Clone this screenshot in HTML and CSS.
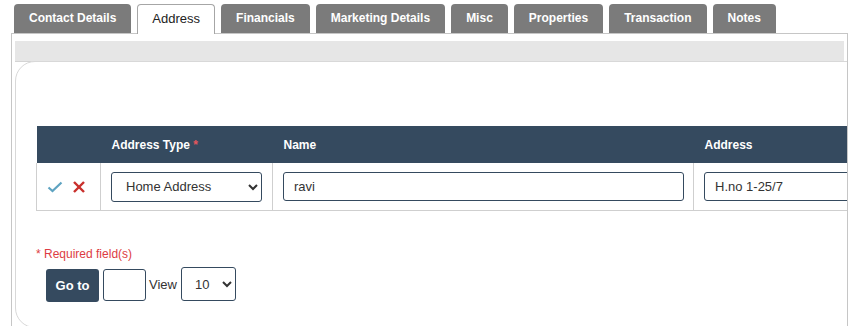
FILE: index.html
```html
<!DOCTYPE html>
<html lang="en">

<head>
    <meta charset="UTF-8">
    <meta name="viewport" content="width=device-width, initial-scale=1.0">
    <title>Address</title>
    <link rel="stylesheet" href="styles.css">
</head>

<body>
    <div class="page">
        <ul class="tabs">
            <li class="tab">Contact Details</li>
            <li class="tab active">Address</li>
            <li class="tab">Financials</li>
            <li class="tab">Marketing Details</li>
            <li class="tab">Misc</li>
            <li class="tab">Properties</li>
            <li class="tab">Transaction</li>
            <li class="tab">Notes</li>
        </ul>

        <div class="panel">
            <div class="panel-bar"></div>
            <div class="card">
                <table class="grid">
                    <colgroup>
                        <col class="col-actions">
                        <col class="col-type">
                        <col class="col-name">
                        <col class="col-address">
                    </colgroup>
                    <thead>
                        <tr>
                            <th></th>
                            <th>Address Type <span class="req">*</span></th>
                            <th>Name</th>
                            <th>Address</th>
                        </tr>
                    </thead>
                    <tbody>
                        <tr>
                            <td class="actions">
                                <svg class="icon" width="16" height="14" viewBox="0 0 16 14">
                                    <polyline points="1.5,7.5 5.5,11 14.5,2.5" fill="none" stroke="#5ea3c1" stroke-width="2.2" />
                                </svg>
                                <svg class="icon" width="14" height="14" viewBox="0 0 14 14">
                                    <line x1="2" y1="2" x2="12" y2="12" stroke="#c9302c" stroke-width="2.4" />
                                    <line x1="12" y1="2" x2="2" y2="12" stroke="#c9302c" stroke-width="2.4" />
                                </svg>
                            </td>
                            <td>
                                <select class="field select-type">
                                    <option>Home Address</option>
                                </select>
                            </td>
                            <td><input class="field input-name" type="text" value="ravi"></td>
                            <td><input class="field input-address" type="text" value="H.no 1-25/7"></td>
                        </tr>
                    </tbody>
                </table>

                <div class="required">* Required field(s)</div>

                <div class="pager">
                    <button class="goto-btn">Go to</button>
                    <input class="field page-input" type="text">
                    <span class="view-label">View</span>
                    <select class="field page-size">
                        <option>10</option>
                    </select>
                </div>
            </div>
        </div>
    </div>
</body>

</html>
```

FILE: styles.css
```css
body {
    margin: 0;
    font-family: "Liberation Sans", Arial, sans-serif;
    background-color: #fff;
    color: #333;
}

.page {
    padding: 4px 0 0 11px;
    width: 837px;
}

/* Tabs */
.tabs {
    display: flex;
    gap: 6px;
    list-style: none;
    margin: 0 0 0 3px;
    padding: 0;
    position: relative;
    z-index: 1;
}

.tab {
    height: 29px;
    line-height: 29px;
    padding: 0 15px;
    background-color: #7b7b7b;
    color: #fff;
    font-size: 12px;
    font-weight: bold;
    border-radius: 4px 4px 0 0;
}

.tab.active {
    height: 29px;
    line-height: 28px;
    padding: 0 14px;
    background-color: #fff;
    color: #222;
    font-size: 13px;
    font-weight: normal;
    border: 1px solid #a6a6a6;
    border-bottom: none;
    margin-bottom: -1px;
}

/* Panel */
.panel {
    border: 1px solid #c6c6c6;
    border-bottom: none;
    padding: 7px 3px 0 3px;
    overflow: hidden;
}

.panel-bar {
    height: 20px;
    background-color: #e6e6e6;
    border-bottom: 1px solid #d4d4d4;
}

.card {
    width: 1100px;
    margin-top: -1px;
    border: 1px solid #d8d8d8;
    border-radius: 20px;
    padding: 64px 0 26px 20px;
    background-color: #fff;
}

/* Grid */
.grid {
    border-collapse: collapse;
    table-layout: fixed;
    width: 1000px;
}

.col-actions {
    width: 64px;
}

.col-type {
    width: 172px;
}

.col-name {
    width: 421px;
}

.grid th {
    height: 37px;
    padding: 0 11px;
    background-color: #354a5f;
    color: #fff;
    font-size: 12px;
    font-weight: bold;
    text-align: left;
}

.req {
    color: #e5575d;
}

.grid td {
    height: 47px;
    padding: 0 10px;
    border-left: 1px solid #cfcfcf;
    border-bottom: 1px solid #cfcfcf;
}

.actions {
    white-space: nowrap;
}

.icon {
    vertical-align: middle;
}

.actions .icon + .icon {
    margin-left: 5px;
}

.field {
    box-sizing: border-box;
    border: 1px solid #354a5f;
    border-radius: 3px;
    font-family: "Liberation Sans", Arial, sans-serif;
    font-size: 13px;
    color: #333;
    background-color: #fff;
}

.select-type {
    width: 151px;
    height: 30px;
    padding: 0 4px 0 10px;
}

.input-name {
    width: 401px;
    height: 29px;
    padding: 0 10px;
}

.input-address {
    width: 200px;
    height: 29px;
    padding: 0 10px;
}

.required {
    margin-top: 36px;
    line-height: 14px;
    font-size: 12px;
    color: #dd3c43;
}

.pager {
    display: flex;
    align-items: center;
    margin: 6px 0 0 10px;
    height: 34px;
}

.goto-btn {
    width: 53px;
    height: 33px;
    margin-top: 2px;
    border: none;
    border-radius: 3px;
    background-color: #354a5f;
    color: #fff;
    font-family: "Liberation Sans", Arial, sans-serif;
    font-size: 13px;
    font-weight: bold;
}

.page-input {
    width: 43px;
    height: 32px;
    margin: 2px 0 0 4px;
}

.view-label {
    margin: 0 4px 0 3px;
    font-size: 13px;
    color: #333;
}

.page-size {
    width: 55px;
    height: 34px;
    padding: 0 4px 0 9px;
}
```
